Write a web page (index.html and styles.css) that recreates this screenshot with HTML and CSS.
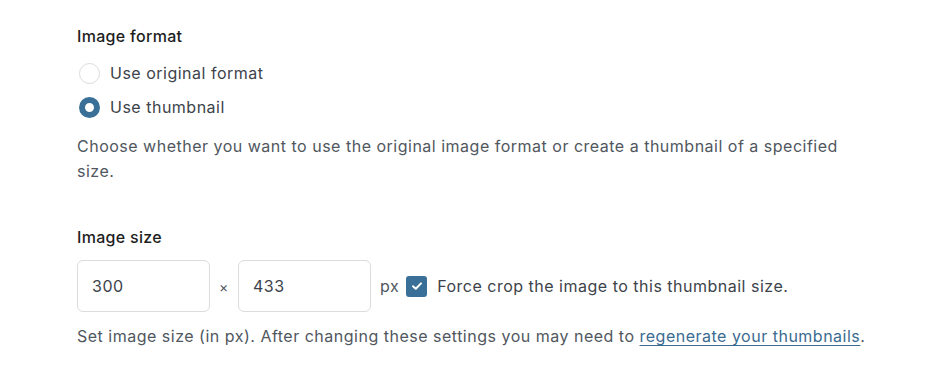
FILE: index.html
```html
<!DOCTYPE html>
<html>
<head>
<meta charset="utf-8">
<link rel="stylesheet" href="styles.css">
</head>
<body>
<div class="panel">
  <section class="field">
    <h3 class="label">Image format</h3>
    <div class="radios">
      <label class="radio-row"><span class="radio"></span><span>Use original format</span></label>
      <label class="radio-row"><span class="radio checked"></span><span>Use thumbnail</span></label>
    </div>
    <p class="help wrap">Choose whether you want to use the original image format or create a thumbnail of a specified size.</p>
  </section>
  <section class="field size">
    <h3 class="label">Image size</h3>
    <div class="size-row">
      <div class="input">300</div>
      <span class="times">×</span>
      <div class="input">433</div>
      <span class="unit">px</span>
      <span class="checkbox"><svg width="12" height="10" viewBox="0 0 12 10"><path d="M2 5.2 L4.8 7.8 L10 2.4" fill="none" stroke="#fff" stroke-width="2" stroke-linecap="round" stroke-linejoin="round"/></svg></span>
      <span class="check-label">Force crop the image to this thumbnail size.</span>
    </div>
    <p class="help">Set image size (in px). After changing these settings you may need to <a href="#" class="link">regenerate your thumbnails</a>.</p>
  </section>
</div>
</body>
</html>
```
FILE: styles.css
```css
html, body {
  margin: 0;
  padding: 0;
  background: #fff;
}
body {
  font-family: Inter, "Noto Sans", sans-serif;
  font-size: 16px;
  letter-spacing: 0.5px;
  color: #50575e;
}
.panel {
  padding: 24px 0 0 77px;
  width: 820px;
}
.label {
  margin: 0;
  font-size: 16px;
  font-weight: 500;
  color: #1e1e1e;
  line-height: 24px;
  letter-spacing: 0.3px;
}
.radios {
  display: flex;
  flex-direction: column;
  gap: 10px;
  margin-top: 13px;
}
.radio-row {
  display: flex;
  align-items: center;
  gap: 10px;
  height: 24px;
  color: #3c434a;
}
.radio {
  width: 21px;
  height: 21px;
  border: 1px solid #dcdcde;
  border-radius: 50%;
  box-sizing: border-box;
  margin-left: 2px;
}
.radio.checked {
  border: 6px solid #3a7098;
  background: #fff;
}
.help {
  margin: 15px 0 0;
  line-height: 25px;
  color: #50575e;
}
.help.wrap {
  width: 790px;
}
.size {
  margin-top: 41px;
}
.size-row {
  display: flex;
  align-items: center;
  margin-top: 11px;
  height: 52px;
}
.input {
  width: 133px;
  height: 52px;
  box-sizing: border-box;
  border: 1px solid #dcdcde;
  border-radius: 6px;
  padding: 0 14px;
  display: flex;
  align-items: center;
  color: #3c434a;
}
.times {
  font-size: 14px;
  width: 28px;
  text-align: center;
  color: #50575e;
}
.unit {
  margin-left: 9px;
  color: #50575e;
}
.checkbox {
  width: 21px;
  height: 21px;
  border-radius: 3px;
  background: #3a7098;
  margin-left: 7px;
  display: flex;
  align-items: center;
  justify-content: center;
}
.check-label {
  margin-left: 10px;
  color: #3c434a;
}
.size .help {
  margin-top: 12px;
}
.link {
  color: #3a6b90;
  text-decoration: underline;
  text-underline-offset: 3px;
}
```
